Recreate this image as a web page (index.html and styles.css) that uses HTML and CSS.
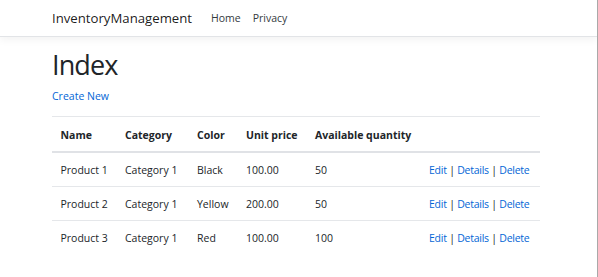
FILE: index.html
```html
<!DOCTYPE html>
<html lang="en">
<head>
<meta charset="utf-8">
<title>Index - InventoryManagement</title>
<link rel="stylesheet" href="styles.css">
</head>
<body>
<header class="navbar">
  <div class="container nav-inner">
    <a class="brand" href="#">InventoryManagement</a>
    <ul class="nav-links">
      <li><a class="nav-link" href="#">Home</a></li>
      <li><a class="nav-link" href="#">Privacy</a></li>
    </ul>
  </div>
</header>
<main class="container">
  <h1 class="title">Index</h1>
  <p class="create"><a href="#">Create New</a></p>
  <table class="table">
    <colgroup>
      <col class="c-name"><col class="c-cat"><col class="c-color"><col class="c-price"><col class="c-qty"><col class="c-act">
    </colgroup>
    <thead>
      <tr><th>Name</th><th>Category</th><th>Color</th><th>Unit price</th><th>Available quantity</th><th></th></tr>
    </thead>
    <tbody>
      <tr><td>Product 1</td><td>Category 1</td><td>Black</td><td>100.00</td><td>50</td><td class="actions"><a href="#">Edit</a> | <a href="#">Details</a> | <a href="#">Delete</a></td></tr>
      <tr><td>Product 2</td><td>Category 1</td><td>Yellow</td><td>200.00</td><td>50</td><td class="actions"><a href="#">Edit</a> | <a href="#">Details</a> | <a href="#">Delete</a></td></tr>
      <tr><td>Product 3</td><td>Category 1</td><td>Red</td><td>100.00</td><td>100</td><td class="actions"><a href="#">Edit</a> | <a href="#">Details</a> | <a href="#">Delete</a></td></tr>
    </tbody>
  </table>
</main>
</body>
</html>
```

FILE: styles.css
```css
* { box-sizing: border-box; }
html, body { margin: 0; padding: 0; }
body {
  font-family: "Open Sans", "Noto Sans", sans-serif;
  font-size: 10.5px;
  line-height: 16.5px;
  color: #212529;
  background: #fff;
  min-height: 100vh;
  border-right: 1px solid #a9a9a9;
}
a { color: #0366d6; text-decoration: none; }

.container {
  width: 488px;
  margin-left: 52px;
}

.navbar {
  height: 37px;
  border-bottom: 1px solid #e2e4e7;
  box-shadow: 0 3px 8px rgba(0, 0, 0, 0.05);
  background: #fff;
}
.nav-inner {
  display: flex;
  align-items: center;
  height: 36px;
}
.brand {
  font-size: 13.2px;
  color: rgba(0, 0, 0, 0.9);
  margin-right: 13px;
  padding-top: 1px;
}
.nav-links {
  display: flex;
  list-style: none;
  margin: 0;
  padding: 0;
}
.nav-link {
  display: block;
  padding: 0 6px;
  color: #343a40;
  font-size: 10.5px;
}

.title {
  font-size: 27px;
  font-weight: 400;
  line-height: 32px;
  letter-spacing: -0.9px;
  margin: 12px 0 7px;
}
.create { margin: 0 0 11px; }

.table {
  width: 488px;
  border-collapse: collapse;
  table-layout: fixed;
}
.c-name { width: 64.5px; }
.c-cat { width: 72px; }
.c-color { width: 49px; }
.c-price { width: 69px; }
.c-qty { width: 113.5px; }
.c-act { width: 120px; }
.table th, .table td {
  text-align: left;
  padding: 8px 8.5px;
  line-height: 17px;
  border-top: 1px solid #e5e7ea;
  vertical-align: top;
  white-space: nowrap;
}
.table th { font-weight: 700; padding-top: 10px; padding-bottom: 7px; }
.table thead th { border-bottom: 2px solid #e0e2e6; }
.table td { padding-top: 9px; padding-bottom: 7px; }
.table td.actions {
  padding-left: 9px;
  letter-spacing: -0.25px;
}
```
